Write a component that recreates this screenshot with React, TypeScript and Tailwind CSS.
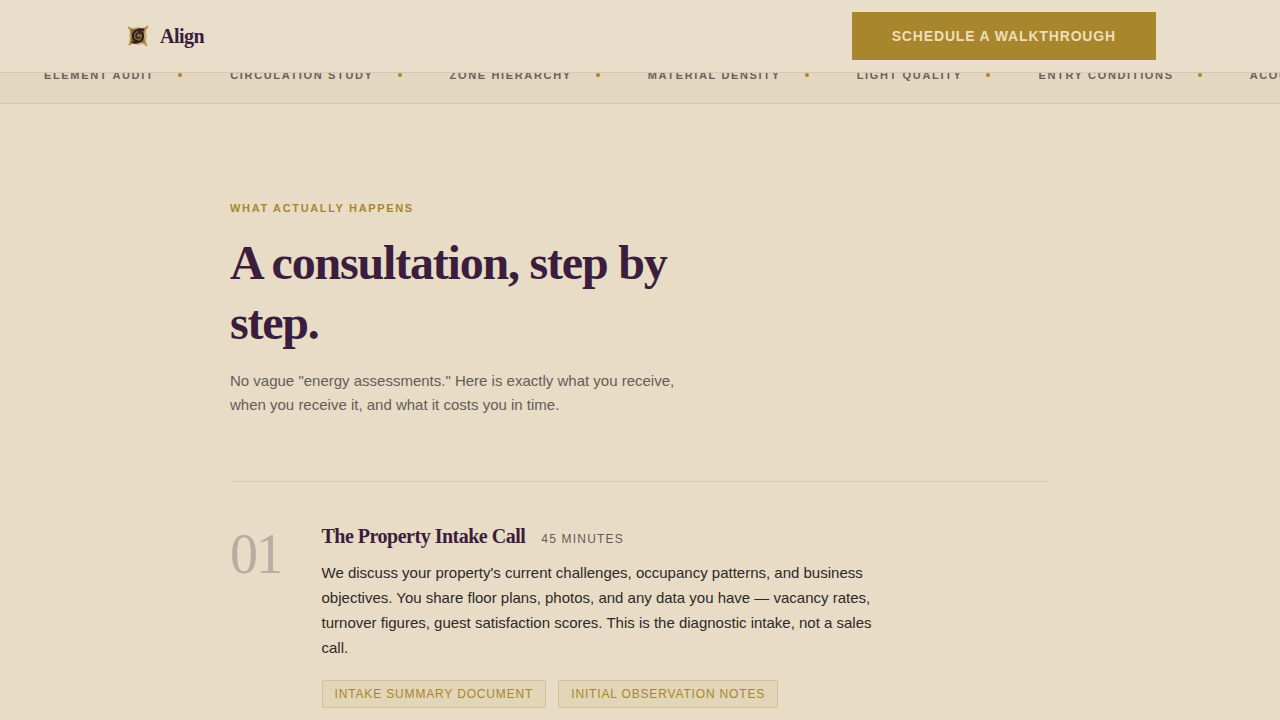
const tickerItems = [
  "Element Audit",
  "Circulation Study",
  "Zone Hierarchy",
  "Material Density",
  "Light Quality",
  "Entry Conditions",
  "Acoustic Mapping",
];

const steps = [
  {
    number: "01",
    title: "The Property Intake Call",
    duration: "45 minutes",
    body: "We discuss your property's current challenges, occupancy patterns, and business objectives. You share floor plans, photos, and any data you have — vacancy rates, turnover figures, guest satisfaction scores. This is the diagnostic intake, not a sales call.",
    deliverables: ["Intake Summary Document", "Initial Observation Notes"],
  },
];

function LogoMark() {
  return (
    <svg viewBox="0 0 28 28" className="size-7" aria-hidden="true">
      {/* pointed corners */}
      <path
        d="M4 5l5 1 4-1 5 1 6-2-2 6 1 4-1 4 1 6-5-2-4 1-5-1-5 1 2-5-1-4 1-4z"
        fill="#cfae76"
      />
      <path d="M6 7l7 0 8-1-1 7 1 8-7-1-8 1 1-7z" fill="#8a6a3e" />
      <path d="M4 5l4 3M24 4l-4 4M5 23l4-3M23 24l-3-4" stroke="#a87b3c" strokeWidth="1.2" />
      {/* swirl */}
      <path
        d="M20 8c-6-2-11 1-11 6 0 3 2 5 5 5M8 20c6 2 11-1 11-6 0-3-2-5-5-5"
        fill="none"
        stroke="#2b1f1c"
        strokeWidth="2"
      />
      <path
        d="M17 12c-2-2-5-1-5 2 0 2 3 3 4 1"
        fill="none"
        stroke="#2b1f1c"
        strokeWidth="1.5"
      />
    </svg>
  );
}

function Header() {
  return (
    <header className="fixed inset-x-0 top-0 z-10 border-b border-[#d6cab3] bg-[#e8deca]">
      <div className="mx-auto flex max-w-[1112px] items-center justify-between px-10 py-3">
        <a href="#" className="flex items-center gap-2">
          <LogoMark />
          <span className="font-['Liberation_Serif',serif] text-xl font-bold tracking-tight text-[#3b1d3d]">
            Align
          </span>
        </a>
        <a
          href="#schedule"
          className="bg-[#a8862d] px-10 py-3 text-sm leading-6 font-bold tracking-[0.06em] text-[#f0deb8] uppercase"
        >
          Schedule a Walkthrough
        </a>
      </div>
    </header>
  );
}

function Ticker() {
  return (
    <div className="overflow-hidden border-y border-[#d3c5ae] bg-[#e3d7c2] py-5">
      <ul className="flex w-max gap-12 pl-11">
        {tickerItems.map((item) => (
          <li
            key={item}
            className="flex items-center gap-6 text-[11px] leading-4 font-bold tracking-[0.15em] whitespace-nowrap text-[#6a6259] uppercase"
          >
            {item}
            <span className="size-1 rounded-full bg-[#a8862d]" />
          </li>
        ))}
      </ul>
    </div>
  );
}

export default function App() {
  return (
    <div className="min-h-screen bg-[#e8dcc6] font-['Liberation_Sans',Arial,sans-serif] text-[#2c2a28]">
      <Header />

      <main className="pt-[46px]">
        <Ticker />

        <section className="mx-auto max-w-[900px] px-10 pt-24">
          <p className="text-[11px] leading-[17px] font-bold tracking-[0.15em] text-[#a8862d] uppercase">
            What actually happens
          </p>
          <h2 className="mt-4 max-w-[480px] font-['Liberation_Serif',serif] text-5xl leading-[60px] font-bold tracking-tight text-[#3b1d3d]">
            A consultation, step by step.
          </h2>
          <p className="mt-4 max-w-[480px] text-[15px] leading-6 text-[#635d57]">
            No vague "energy assessments." Here is exactly what you receive, when you receive it, and what it costs you in time.
          </p>

          <div className="mt-16">
            {steps.map((step) => (
              <article key={step.number} className="flex gap-10 border-t border-[#d6cab3] py-10">
                <div className="pt-1 font-['Liberation_Serif',serif] text-[56px] leading-[56px] tracking-[-0.04em] text-[#baaca1]">
                  {step.number}
                </div>
                <div className="max-w-[560px]">
                  <div className="flex items-baseline gap-4">
                    <h3 className="font-['Liberation_Serif',serif] text-xl leading-7 font-bold tracking-tight text-[#3b1d3d]">
                      {step.title}
                    </h3>
                    <span className="text-xs tracking-widest text-[#635d57] uppercase">
                      {step.duration}
                    </span>
                  </div>
                  <p className="mt-2.5 text-[15px] leading-[25px]">{step.body}</p>
                  <ul className="mt-5 flex gap-3">
                    {step.deliverables.map((name) => (
                      <li
                        key={name}
                        className="rounded-xs border border-[#cfc097] bg-[#e2d5b8] px-3 py-1 text-xs leading-[18px] tracking-[0.07em] whitespace-nowrap text-[#a8862d] uppercase"
                      >
                        {name}
                      </li>
                    ))}
                  </ul>
                </div>
              </article>
            ))}
          </div>
        </section>
      </main>
    </div>
  );
}
